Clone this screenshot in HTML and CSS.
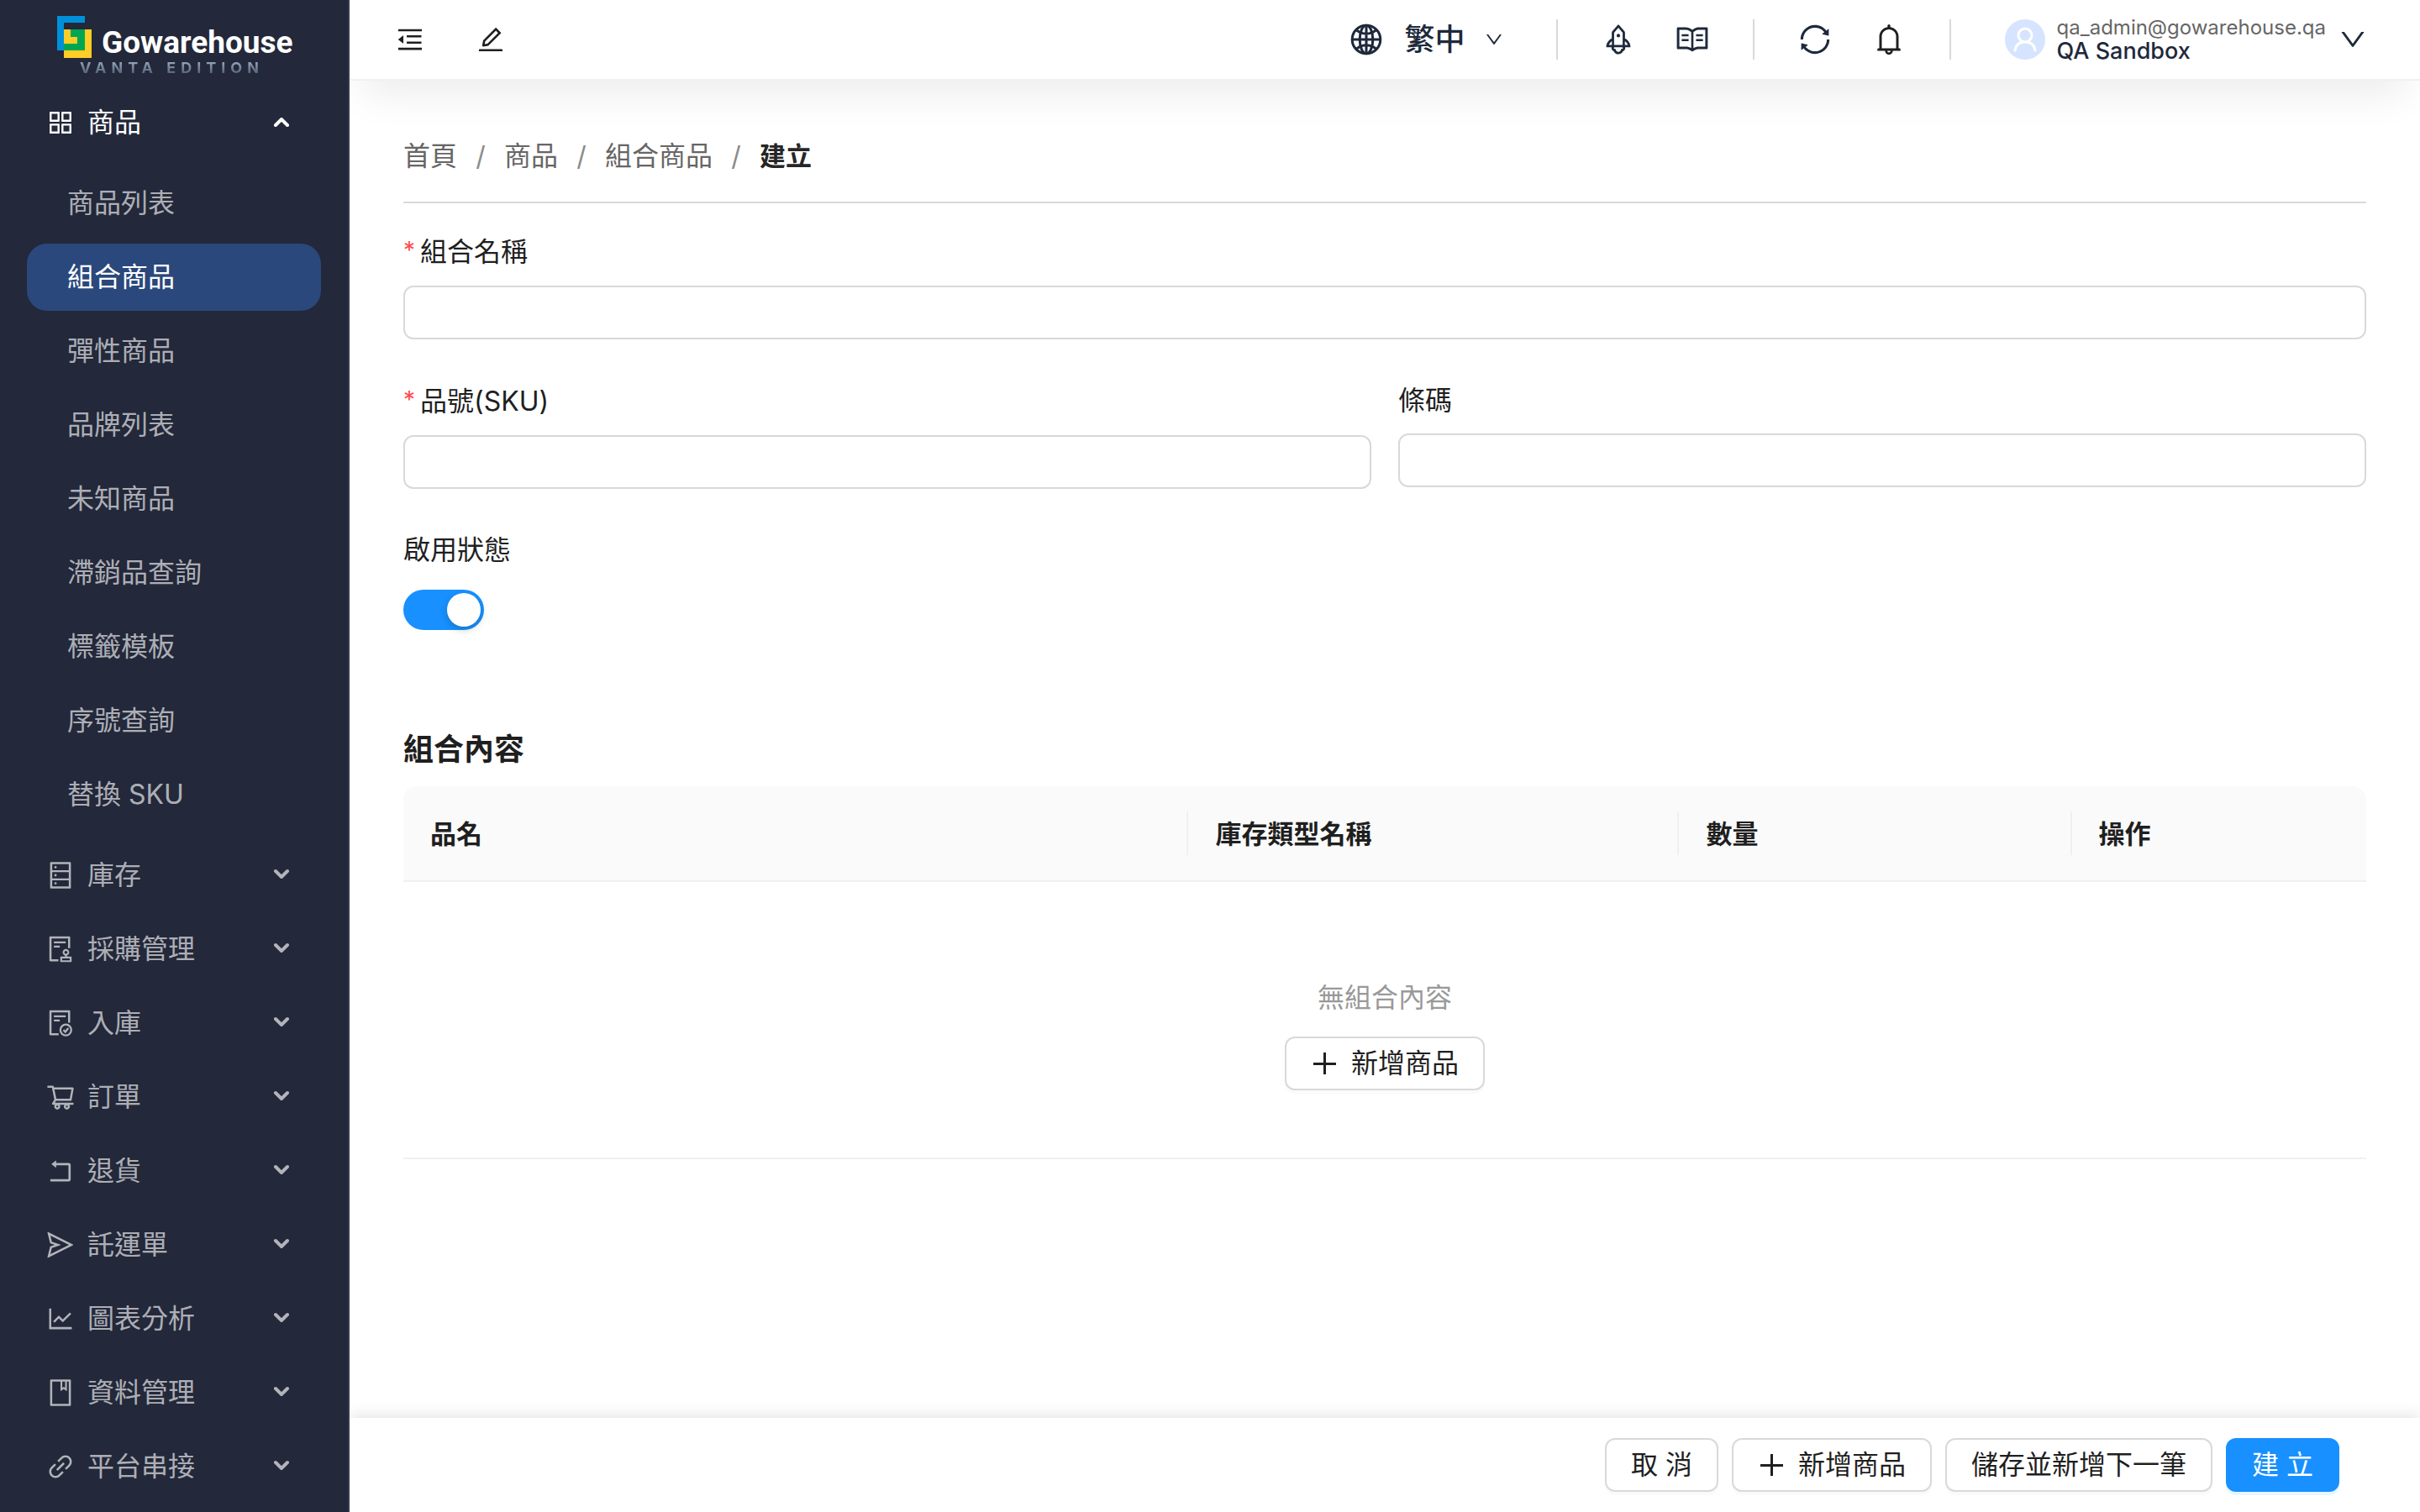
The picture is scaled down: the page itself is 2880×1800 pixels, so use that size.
FILE: index.html
```html
<!DOCTYPE html>
<html lang="zh-Hant">
<head>
<meta charset="utf-8">
<meta name="viewport" content="width=device-width, initial-scale=1">
<title>建立組合商品 - GoWarehouse</title>
<link rel="stylesheet" href="styles.css">
</head>
<body>
<svg class="sprite" aria-hidden="true">
  <symbol id="i-app" viewBox="0 0 1024 1024"><path d="M464 144H160c-8.8 0-16 7.2-16 16v304c0 8.800 7.200 16 16 16h304c8.800 0 16-7.200 16-16V160c0-8.800-7.200-16-16-16zm-52 268H212V212h200v200zm452-268H560c-8.800 0-16 7.200-16 16v304c0 8.800 7.200 16 16 16h304c8.800 0 16-7.200 16-16V160c0-8.800-7.200-16-16-16zm-52 268H612V212h200v200zM464 544H160c-8.800 0-16 7.200-16 16v304c0 8.800 7.200 16 16 16h304c8.800 0 16-7.200 16-16V560c0-8.800-7.200-16-16-16zm-52 268H212V612h200v200zm452-268H560c-8.800 0-16 7.200-16 16v304c0 8.800 7.200 16 16 16h304c8.800 0 16-7.200 16-16V560c0-8.800-7.200-16-16-16zm-52 268H612V612h200v200z"/></symbol>
  <symbol id="i-database" viewBox="0 0 1024 1024"><path d="M832 64H192c-17.700 0-32 14.300-32 32v832c0 17.700 14.300 32 32 32h640c17.700 0 32-14.300 32-32V96c0-17.700-14.300-32-32-32zm-600 72h560v208H232V136zm560 480H232V408h560v208zm0 272H232V680h560v208zM304 240a40 40 0 1 0 80 0 40 40 0 1 0-80 0zm0 272a40 40 0 1 0 80 0 40 40 0 1 0-80 0zm0 272a40 40 0 1 0 80 0 40 40 0 1 0-80 0z"/></symbol>
  <symbol id="i-audit" viewBox="0 0 1024 1024"><path d="M296 250c-4.400 0-8 3.600-8 8v48c0 4.400 3.600 8 8 8h384c4.400 0 8-3.600 8-8v-48c0-4.400-3.600-8-8-8H296zm184 144H296c-4.400 0-8 3.600-8 8v48c0 4.400 3.600 8 8 8h184c4.400 0 8-3.600 8-8v-48c0-4.400-3.600-8-8-8zm-48 458H208V148h560v320c0 4.400 3.600 8 8 8h56c4.400 0 8-3.600 8-8V108c0-17.700-14.300-32-32-32H168c-17.700 0-32 14.300-32 32v784c0 17.700 14.300 32 32 32h264c4.400 0 8-3.600 8-8v-56c0-4.400-3.600-8-8-8zm440-88H728v-36.600c46.300-13.800 80-56.600 80-107.400 0-61.900-50.100-112-112-112s-112 50.100-112 112c0 50.700 33.700 93.600 80 107.400V764H520c-8.800 0-16 7.200-16 16v152c0 8.800 7.200 16 16 16h352c8.800 0 16-7.200 16-16V780c0-8.800-7.200-16-16-16zM646 620c0-27.600 22.400-50 50-50s50 22.400 50 50-22.400 50-50 50-50-22.400-50-50zm180 266H566v-60h260v60z"/></symbol>
  <symbol id="i-inbound" viewBox="0 0 1024 1024"><path d="M296 250c-4.400 0-8 3.600-8 8v48c0 4.400 3.600 8 8 8h384c4.400 0 8-3.600 8-8v-48c0-4.400-3.600-8-8-8H296zm184 144H296c-4.400 0-8 3.600-8 8v48c0 4.400 3.600 8 8 8h184c4.400 0 8-3.600 8-8v-48c0-4.400-3.600-8-8-8zm-40 458H208V148h560v344c0 4.400 3.600 8 8 8h56c4.400 0 8-3.600 8-8V108c0-17.700-14.300-32-32-32H168c-17.700 0-32 14.300-32 32v784c0 17.700 14.300 32 32 32h272c4.400 0 8-3.600 8-8v-56c0-4.400-3.600-8-8-8z"/><g fill="none" stroke="currentColor" stroke-width="64"><circle cx="692" cy="744" r="184"/><path d="M612 744l64 66 100-128"/></g></symbol>
  <symbol id="i-cart" viewBox="0 0 1024 1024"><path d="M922.900 701.900H327.400l29.900-60.900 496.800-.9c16.800 0 31.200-12 34.200-28.600l68.800-385.100c1.800-10.100-.9-20.500-7.500-28.400a34.990 34.990 0 0 0-26.600-12.500l-632-2.100-5.400-25.400c-3.400-16.200-18-28-34.600-28H96.500a35.300 35.300 0 1 0 0 70.600h125.900L246 312.800l58.100 281.300-74.800 122.100a34.960 34.960 0 0 0-3 36.800c6 11.900 18.100 19.400 31.500 19.400h62.800a102.430 102.430 0 0 0-20.600 61.700c0 56.600 46 102.600 102.600 102.600s102.600-46 102.600-102.600c0-22.300-7.400-44-20.600-61.700h161.100a102.430 102.430 0 0 0-20.600 61.700c0 56.600 46 102.600 102.600 102.600s102.600-46 102.600-102.600c0-22.300-7.400-44-20.600-61.700H923c19.400 0 35.300-15.800 35.300-35.300a35.420 35.420 0 0 0-35.400-35.200zM305.700 253l575.800 1.900-56.400 315.800-452.300.8L305.700 253zm96.900 612.700c-17.400 0-31.600-14.200-31.600-31.600 0-17.400 14.200-31.600 31.600-31.600s31.600 14.200 31.600 31.600a31.600 31.600 0 0 1-31.600 31.600zm325.100 0c-17.400 0-31.600-14.200-31.600-31.600 0-17.400 14.200-31.600 31.600-31.600s31.600 14.200 31.600 31.600a31.600 31.600 0 0 1-31.600 31.600z"/></symbol>
  <symbol id="i-rollback" viewBox="0 0 1024 1024"><path d="M793 242H366v-74c0-6.700-7.700-10.400-12.900-6.300l-142 112a8 8 0 0 0 0 12.600l142 112c5.200 4.100 12.900.4 12.900-6.300v-74h415v470H175c-4.400 0-8 3.600-8 8v60c0 4.400 3.600 8 8 8h618c35.300 0 64-28.700 64-64V306c0-35.300-28.700-64-64-64z"/></symbol>
  <symbol id="i-send" viewBox="0 0 1024 1024"><path d="M931.400 498.900L94.900 79.500c-3.400-1.700-7.300-2.100-11-1.200a15.990 15.990 0 0 0-11.700 19.300l86.200 352.200c1.300 5.300 5.200 9.600 10.400 11.300l147.700 50.700-147.600 50.700c-5.200 1.800-9.100 6-10.300 11.300L72.200 926.500c-.9 3.700-.5 7.600 1.200 10.900 3.900 7.900 13.500 11.100 21.500 7.200l836.500-417c3.100-1.500 5.600-4.100 7.200-7.100 3.900-8 .7-17.600-7.200-21.600zM170.800 826.300l50.300-205.600 295.200-101.300c2.300-.8 4.200-2.600 5-5 1.400-4.200-.8-8.700-5-10.200L221.100 403 171 198.200l628 314.900-628.200 313.200z"/></symbol>
  <symbol id="i-chart" viewBox="0 0 1024 1024"><path d="M888 792H200V168c0-4.400-3.600-8-8-8h-56c-4.400 0-8 3.600-8 8v688c0 4.400 3.600 8 8 8h752c4.400 0 8-3.600 8-8v-56c0-4.400-3.600-8-8-8zM305.800 637.700c3.100 3.100 8.100 3.100 11.300 0l138.300-137.600L583 628.500c3.100 3.100 8.200 3.100 11.300 0l275.400-275.300c3.100-3.100 3.100-8.200 0-11.300l-39.600-39.600a8.030 8.030 0 0 0-11.300 0l-230 229.900L461.400 404a8.030 8.030 0 0 0-11.300 0L266.300 586.700a8.030 8.030 0 0 0 0 11.300l39.500 39.700z"/></symbol>
  <symbol id="i-book" viewBox="0 0 1024 1024"><path d="M832 64H192c-17.700 0-32 14.300-32 32v832c0 17.700 14.300 32 32 32h640c17.700 0 32-14.300 32-32V96c0-17.700-14.300-32-32-32zm-260 72h96v209.900L621.500 312 572 347.400V136zm220 752H232V136h280v296.900c0 3.300 1 6.600 3 9.300a15.900 15.900 0 0 0 22.300 3.700l83.800-59.900 81.400 59.400c2.700 2 6 3.100 9.400 3.100 8.800 0 16-7.200 16-16V136h64v752z"/></symbol>
  <symbol id="i-link" viewBox="0 0 1024 1024"><path d="M574 665.400a8.030 8.030 0 0 0-11.300 0L446.500 781.600c-53.800 53.800-144.600 59.500-204 0-59.500-59.500-53.800-150.200 0-204l116.200-116.200c3.100-3.100 3.100-8.200 0-11.300l-39.800-39.800a8.030 8.030 0 0 0-11.300 0L191.400 526.500c-84.600 84.600-84.600 221.500 0 306s221.500 84.600 306 0l116.200-116.200c3.100-3.100 3.100-8.200 0-11.300L574 665.400zm258.600-474c-84.600-84.600-221.500-84.600-306 0L410.300 307.600a8.030 8.030 0 0 0 0 11.300l39.700 39.700c3.100 3.100 8.200 3.100 11.300 0l116.200-116.200c53.800-53.800 144.600-59.500 204 0 59.500 59.500 53.800 150.200 0 204L665.300 562.600a8.030 8.030 0 0 0 0 11.300l39.800 39.800c3.100 3.100 8.200 3.100 11.300 0l116.200-116.200c84.500-84.600 84.500-221.500 0-306.100zM610.100 372.300a8.030 8.030 0 0 0-11.300 0L372.300 598.700a8.030 8.030 0 0 0 0 11.300l39.600 39.600c3.100 3.100 8.200 3.100 11.300 0l226.400-226.400c3.100-3.100 3.100-8.200 0-11.300l-39.500-39.600z"/></symbol>
  <symbol id="i-fold" viewBox="0 0 1024 1024"><path d="M408 442h480c4.400 0 8-3.600 8-8v-56c0-4.400-3.600-8-8-8H408c-4.400 0-8 3.600-8 8v56c0 4.400 3.600 8 8 8zm-8 204c0 4.400 3.600 8 8 8h480c4.400 0 8-3.600 8-8v-56c0-4.400-3.600-8-8-8H408c-4.400 0-8 3.600-8 8v56zm504-486H120c-4.400 0-8 3.600-8 8v56c0 4.400 3.600 8 8 8h784c4.400 0 8-3.600 8-8v-56c0-4.400-3.600-8-8-8zm0 632H120c-4.400 0-8 3.600-8 8v56c0 4.400 3.600 8 8 8h784c4.400 0 8-3.600 8-8v-56c0-4.400-3.600-8-8-8zM115.400 518.900L271.700 642c5.800 4.600 14.400.5 14.400-6.900V388.900c0-7.400-8.500-11.500-14.400-6.900L115.400 505.100a8.740 8.740 0 0 0 0 13.800z"/></symbol>
  <symbol id="i-edit" viewBox="0 0 1024 1024"><path d="M257.700 752c2 0 4-.2 6-.5L431.900 722c2-.4 3.900-1.300 5.300-2.800l423.900-423.900a9.960 9.960 0 0 0 0-14.100L694.900 114.900c-1.900-1.900-4.400-2.900-7.100-2.900s-5.200 1-7.100 2.900L256.800 538.800c-1.500 1.500-2.400 3.300-2.800 5.300l-29.500 168.200a33.500 33.500 0 0 0 9.400 29.800c6.600 6.400 14.900 9.900 23.800 9.900zm67.400-174.400L687.800 215l73.300 73.300-362.700 362.600-88.900 15.700 15.600-89zM880 836H144c-17.700 0-32 14.300-32 32v36c0 4.400 3.600 8 8 8h784c4.400 0 8-3.600 8-8v-36c0-17.700-14.300-32-32-32z"/></symbol>
  <symbol id="i-globe" viewBox="0 0 1024 1024"><g fill="none" stroke="currentColor" stroke-width="74"><circle cx="512" cy="512" r="410"/><ellipse cx="512" cy="512" rx="190" ry="410"/><path d="M512 102v820M102 512h820M218 236q140 112 294 112t294-112M218 788q140-112 294-112t294 112"/></g></symbol>
  <symbol id="i-rocket" viewBox="0 0 1024 1024"><path fill-rule="evenodd" d="M864 736c0-111.600-65.400-208-160-252.900V317.300c0-15.100-5.300-29.700-15.100-41.200L536.500 95.400C530.100 87.800 521 84 512 84s-18.100 3.800-24.500 11.400L335.100 276.100a63.970 63.970 0 0 0-15.100 41.200v165.800C225.400 528 160 624.400 160 736h156.500c-2.300 7.200-3.500 15-3.500 23.800 0 22.100 7.600 43.700 21.400 60.800a97.200 97.200 0 0 0 43.100 30.600c23.100 54 75.600 88.800 134.500 88.800 29.100 0 57.300-8.600 81.400-24.800 23.600-15.800 41.900-37.900 53-64a97 97 0 0 0 43.100-30.500 97.520 97.520 0 0 0 21.400-60.800c0-8.400-1.100-16.400-3.100-23.800H864zM762.300 621.400c9.400 14.600 17 30.300 22.500 46.600H700V558.700a211.600 211.600 0 0 1 62.300 62.700zM388 483.100V318.800l124-147 124 147V668H388V483.100zM239.200 668c5.500-16.300 13.100-32 22.500-46.600 16.300-25.200 37.500-46.500 62.300-62.700V668h-84.800zm388.900 116.200c-5.200 3-11.200 4.200-17.100 3.400l-19.500-2.400-2.800 19.400c-5.400 37.900-38.400 66.500-76.700 66.500-38.300 0-71.300-28.600-76.700-66.500l-2.800-19.500-19.500 2.500a27.700 27.700 0 0 1-17.100-3.500c-8.700-5-14.100-14.300-14.100-24.400 0-10.600 5.900-19.400 14.600-23.800h231.300c8.800 4.500 14.600 13.300 14.600 23.800-.1 10.200-5.500 19.600-14.200 24.500z"/><circle cx="512" cy="400" r="50"/></symbol>
  <symbol id="i-read" viewBox="0 0 1024 1024"><path d="M928 161H699.200c-49.100 0-97.100 14.100-138.400 40.700L512 233l-48.800-31.300A255.200 255.200 0 0 0 324.800 161H96c-17.700 0-32 14.300-32 32v568c0 17.700 14.300 32 32 32h228.800c49.100 0 97.100 14.100 138.400 40.700l44.400 28.600c1.300.8 2.800 1.300 4.300 1.300s3-.4 4.300-1.300l44.400-28.600C602 807.100 650.100 793 699.200 793H928c17.700 0 32-14.300 32-32V193c0-17.700-14.300-32-32-32zM324.800 721H136V233h188.800c35.400 0 69.800 10.100 99.500 29.200l48.800 31.300 6.900 4.500v462c-47.600-25.600-100.800-39-155.200-39zm563.200 0H699.200c-54.400 0-107.600 13.400-155.200 39V298l6.900-4.500 48.800-31.300c29.700-19.100 64.100-29.200 99.500-29.200H888v488zM204 361h200v60H204zM620 361h200v60H620zM204 501h200v60H204zM620 501h200v60H620z"/></symbol>
  <symbol id="i-sync" viewBox="0 0 1024 1024"><path d="M168 504.200c1-43.700 10-86.100 26.900-126 17.300-41 42.100-77.700 73.700-109.400S337 212.300 378 195c42.400-17.900 87.400-27 133.900-27s91.500 9.100 133.800 27A341.500 341.500 0 0 1 755 268.800c9.900 9.900 19.200 20.400 27.800 31.400l-60.200 47a8 8 0 0 0 3 14.100l175.700 43c5 1.200 9.900-2.600 9.900-7.700l.8-180.900c0-6.700-7.700-10.500-12.900-6.300l-56.400 44.100C765.800 155.100 646.200 92 511.800 92 282.700 92 96.300 275.600 92 503.800a8 8 0 0 0 8 8.200h60c4.400 0 7.900-3.500 8-7.800zm756 7.800h-60c-4.400 0-7.900 3.500-8 7.800-1 43.700-10 86.100-26.900 126-17.300 41-42.100 77.800-73.700 109.400A342.450 342.450 0 0 1 512.100 856a342.240 342.240 0 0 1-243.200-100.800c-9.900-9.900-19.200-20.400-27.800-31.400l60.200-47a8 8 0 0 0-3-14.100l-175.700-43c-5-1.200-9.900 2.600-9.900 7.700l-.7 181c0 6.700 7.700 10.500 12.900 6.300l56.400-44.100C258.200 868.900 377.800 932 512.200 932c229.200 0 415.500-183.700 419.800-411.800a8 8 0 0 0-8-8.200z"/></symbol>
  <symbol id="i-bell" viewBox="0 0 1024 1024"><path d="M816 768h-24V428c0-141.100-104.300-257.700-240-277.100V112c0-22.100-17.900-40-40-40s-40 17.900-40 40v38.900c-135.700 19.400-240 136-240 277.100v340h-24c-17.700 0-32 14.300-32 32v32c0 4.400 3.600 8 8 8h216c0 61.800 50.200 112 112 112s112-50.200 112-112h216c4.400 0 8-3.600 8-8v-32c0-17.700-14.300-32-32-32zM512 888c-26.500 0-48-21.500-48-48h96c0 26.500-21.500 48-48 48zM304 768V428c0-55.600 21.600-107.800 60.900-147.100S456.400 220 512 220c55.600 0 107.800 21.600 147.100 60.900S720 372.400 720 428v340H304z"/></symbol>
  <symbol id="i-down" viewBox="0 0 1024 1024"><path d="M884 256h-75c-5.100 0-9.900 2.500-12.900 6.600L512 654.200 227.900 262.600c-3-4.100-7.800-6.600-12.900-6.600h-75c-6.500 0-10.300 7.400-6.500 12.700l352.600 486.100c12.800 17.600 39 17.600 51.700 0l352.600-486.100c3.900-5.300.1-12.700-6.400-12.700z"/></symbol>
  <symbol id="i-plus" viewBox="0 0 32 32"><path d="M15 3h3v26h-3zM3 15h27v3H3z"/></symbol>
  <symbol id="i-arrow" viewBox="0 0 20 12"><path d="M3 3l7 7 7-7" fill="none" stroke="currentColor" stroke-width="4" stroke-linecap="round"/></symbol>
</svg>

<div class="app">
  <aside class="sidebar">
    <a class="brand" href="#">
      <span class="brand__row">
        <svg class="brand__mark" viewBox="0 0 41 50" aria-hidden="true">
          <path fill="#0090da" d="M0 0h33v8H8v33H0z"/>
          <path fill="#ffcd28" d="M8 16h33v34H8z"/>
          <path fill="#00a651" d="M16 16h17v25H8v-8h16v-8h-8z"/>
        </svg>
        <span class="brand__name">Gowarehouse</span>
      </span>
      <span class="brand__edition">VANTA EDITION</span>
    </a>
    <nav class="menu" aria-label="主選單">
      <button class="menu__group menu__group--open" type="button" aria-expanded="true"><svg class="menu__icon"><use href="#i-app"/></svg><span class="menu__text">商品</span><svg class="menu__arrow"><use href="#i-arrow"/></svg></button>
      <div class="submenu">
        <a class="submenu__item" href="#">商品列表</a>
        <a class="submenu__item submenu__item--active" href="#" aria-current="page">組合商品</a>
        <a class="submenu__item" href="#">彈性商品</a>
        <a class="submenu__item" href="#">品牌列表</a>
        <a class="submenu__item" href="#">未知商品</a>
        <a class="submenu__item" href="#">滯銷品查詢</a>
        <a class="submenu__item" href="#">標籤模板</a>
        <a class="submenu__item" href="#">序號查詢</a>
        <a class="submenu__item" href="#">替換 SKU</a>
      </div>
      <button class="menu__group" type="button"><svg class="menu__icon"><use href="#i-database"/></svg><span class="menu__text">庫存</span><svg class="menu__arrow"><use href="#i-arrow"/></svg></button>
      <button class="menu__group" type="button"><svg class="menu__icon"><use href="#i-audit"/></svg><span class="menu__text">採購管理</span><svg class="menu__arrow"><use href="#i-arrow"/></svg></button>
      <button class="menu__group" type="button"><svg class="menu__icon"><use href="#i-inbound"/></svg><span class="menu__text">入庫</span><svg class="menu__arrow"><use href="#i-arrow"/></svg></button>
      <button class="menu__group" type="button"><svg class="menu__icon"><use href="#i-cart"/></svg><span class="menu__text">訂單</span><svg class="menu__arrow"><use href="#i-arrow"/></svg></button>
      <button class="menu__group" type="button"><svg class="menu__icon"><use href="#i-rollback"/></svg><span class="menu__text">退貨</span><svg class="menu__arrow"><use href="#i-arrow"/></svg></button>
      <button class="menu__group" type="button"><svg class="menu__icon"><use href="#i-send"/></svg><span class="menu__text">託運單</span><svg class="menu__arrow"><use href="#i-arrow"/></svg></button>
      <button class="menu__group" type="button"><svg class="menu__icon"><use href="#i-chart"/></svg><span class="menu__text">圖表分析</span><svg class="menu__arrow"><use href="#i-arrow"/></svg></button>
      <button class="menu__group" type="button"><svg class="menu__icon"><use href="#i-book"/></svg><span class="menu__text">資料管理</span><svg class="menu__arrow"><use href="#i-arrow"/></svg></button>
      <button class="menu__group" type="button"><svg class="menu__icon"><use href="#i-link"/></svg><span class="menu__text">平台串接</span><svg class="menu__arrow"><use href="#i-arrow"/></svg></button>
    </nav>
  </aside>

  <div class="page">
    <header class="topbar">
      <div class="topbar__tools">
        <button class="icon-btn icon-btn--small" type="button" aria-label="收合選單"><svg><use href="#i-fold"/></svg></button>
        <button class="icon-btn icon-btn--small" type="button" aria-label="編輯"><svg><use href="#i-edit"/></svg></button>
      </div>
      <button class="lang" type="button" aria-haspopup="true"><svg class="lang__globe"><use href="#i-globe"/></svg><span>繁中</span><svg class="lang__down"><use href="#i-down"/></svg></button>
      <div class="topbar__group">
        <button class="icon-btn" type="button" aria-label="最新功能"><svg><use href="#i-rocket"/></svg></button>
        <button class="icon-btn" type="button" aria-label="使用手冊"><svg><use href="#i-read"/></svg></button>
      </div>
      <div class="topbar__group">
        <button class="icon-btn" type="button" aria-label="重新整理"><svg><use href="#i-sync"/></svg></button>
        <button class="icon-btn icon-btn--dark" type="button" aria-label="通知"><svg><use href="#i-bell"/></svg></button>
      </div>
      <button class="account" type="button" aria-haspopup="true">
        <svg class="account__avatar" viewBox="0 0 48 48" aria-hidden="true"><circle cx="24" cy="24" r="24" fill="#d6e4ff"/><g fill="none" stroke="#fff" stroke-width="3" stroke-linecap="round"><circle cx="24" cy="19" r="8"/><path d="M12 37c1-7 5-10 12-10s11 3 12 10"/></g></svg>
        <span class="account__text"><span class="account__mail">qa_admin@gowarehouse.qa</span><span class="account__name">QA Sandbox</span></span>
        <svg class="account__down"><use href="#i-down"/></svg>
      </button>
    </header>

    <main class="content">
      <nav class="breadcrumb" aria-label="麵包屑">
        <a href="#">首頁</a><span class="breadcrumb__sep">/</span><a href="#">商品</a><span class="breadcrumb__sep">/</span><a href="#">組合商品</a><span class="breadcrumb__sep">/</span><strong>建立</strong>
      </nav>
      <form class="form" id="bundle-form">
        <div class="field">
          <label class="field__label field__label--required" for="name">組合名稱</label>
          <input class="field__input" id="name" type="text" required>
        </div>
        <div class="form__row">
          <div class="field">
            <label class="field__label field__label--required" for="sku">品號(SKU)</label>
            <input class="field__input" id="sku" type="text" required>
          </div>
          <div class="field">
            <label class="field__label" for="barcode">條碼</label>
            <input class="field__input" id="barcode" type="text">
          </div>
        </div>
        <div class="field field--switch">
          <label class="field__label" for="enabled">啟用狀態</label>
          <input class="switch" id="enabled" type="checkbox" role="switch" checked>
        </div>
      </form>
      <section class="bundle">
        <h2 class="bundle__title">組合內容</h2>
        <table class="table">
          <colgroup><col class="table__name"><col class="table__type"><col class="table__qty"><col class="table__action"></colgroup>
          <thead><tr><th scope="col">品名</th><th scope="col">庫存類型名稱</th><th scope="col">數量</th><th scope="col">操作</th></tr></thead>
          <tbody><tr><td colspan="4">
            <div class="empty">
              <p class="empty__text">無組合內容</p>
              <button class="btn" type="button"><svg class="btn__icon"><use href="#i-plus"/></svg>新增商品</button>
            </div>
          </td></tr></tbody>
        </table>
      </section>
    </main>

    <footer class="actions">
      <button class="btn" type="button">取 消</button>
      <button class="btn" type="button"><svg class="btn__icon"><use href="#i-plus"/></svg>新增商品</button>
      <button class="btn" type="button">儲存並新增下一筆</button>
      <button class="btn btn--primary" type="submit" form="bundle-form">建 立</button>
    </footer>
  </div>
</div>
</body>
</html>
```
FILE: styles.css
```css
:root {
  --text: #1f1f1f;
  --ink: #1e293b;
  --line: #d9d9d9;
  --line-soft: #f0f0f0;
  --primary: #1890ff;
  --side: #23283a;
}

* { box-sizing: border-box; }

body {
  margin: 0;
  background: #fff;
  color: var(--text);
  font: 400 32px/48px Inter, "Noto Sans CJK TC", sans-serif;
}

button, input { font: inherit; color: inherit; }
button { padding: 0; border: 0; background: none; cursor: pointer; }
a { color: inherit; text-decoration: none; }
svg { display: block; flex: none; fill: currentColor; }
.sprite { position: absolute; width: 0; height: 0; }

.app { display: flex; min-height: 100vh; }

/* Sidebar */
.sidebar {
  position: relative;
  z-index: 2;
  flex: none;
  width: 416px;
  background: var(--side);
  border-right: 2px solid #343a4c;
  color: rgba(255, 255, 255, .65);
}
.brand { display: block; height: 106px; padding: 19px 0 0 68px; }
.brand__row { display: flex; gap: 12px; height: 50px; }
.brand__mark { width: 41px; height: 50px; }
.brand__name {
  color: #fff;
  font: 700 37px/64px Roboto, sans-serif;
}
.brand__edition {
  display: block;
  width: max-content;
  margin-left: 27px;
  font: 700 18px/24px Inter, sans-serif;
  letter-spacing: 6px;
  background: linear-gradient(#94a3b8 20%, #475569 90%);
  background-clip: text;
  color: transparent;
}
.menu { display: flex; flex-direction: column; gap: 8px; }
.menu__group {
  display: flex;
  align-items: center;
  gap: 14px;
  height: 80px;
  padding: 0 69px 0 54px;
  text-align: left;
}
.menu__group--open { color: #fff; }
.menu__icon { width: 36px; height: 36px; }
.menu__text { flex: 1; }
.menu__arrow { width: 20px; height: 12px; margin-bottom: 4px; }
.menu__group--open .menu__arrow { transform: rotate(180deg); margin-bottom: 0; }
.submenu {
  display: flex;
  flex-direction: column;
  gap: 8px;
  padding: 8px 32px;
}
.submenu__item {
  height: 80px;
  padding-left: 48px;
  border-radius: 24px;
  line-height: 80px;
}
.submenu__item--active { background: #2a487c; color: #fff; }

/* Page frame */
.page { display: flex; flex: 1; flex-direction: column; min-width: 0; }
.topbar {
  position: sticky;
  top: 0;
  z-index: 1;
  display: flex;
  align-items: center;
  height: 96px;
  padding: 0 62px 0 54px;
  background: #fff;
  border-bottom: 2px solid var(--line-soft);
  box-shadow: 0 32px 48px -16px rgba(0, 0, 0, .08);
  color: var(--ink);
}
.topbar__tools { display: flex; gap: 60px; margin-right: auto; color: var(--text); }
.icon-btn svg { width: 42px; height: 42px; }
.icon-btn--small svg { width: 36px; height: 36px; }
.icon-btn--dark { color: var(--text); }
.topbar__group, .account {
  display: flex;
  align-items: center;
  height: 48px;
  border-left: 2px solid var(--line);
}
.topbar__group { gap: 46px; padding: 0 51px; }
.lang {
  display: flex;
  align-items: center;
  padding-right: 62px;
  font-size: 36px;
  font-weight: 500;
}
.lang__globe { width: 42px; height: 42px; margin-right: 25px; }
.lang__down { width: 24px; height: 24px; margin-left: 22px; }
.account { gap: 14px; padding-left: 64px; text-align: left; }
.account__avatar { width: 48px; height: 48px; }
.account__text { display: flex; flex-direction: column; line-height: 28px; }
.account__mail { color: #666; font-size: 24px; }
.account__name { font-size: 27px; font-weight: 500; }
.account__down { width: 36px; height: 36px; }

.content { flex: 1; padding: 66px 64px 48px; }

.breadcrumb {
  display: flex;
  padding-bottom: 30px;
  border-bottom: 2px solid var(--line);
  color: #666;
}
.breadcrumb__sep { width: 56px; color: #8c8c8c; text-align: center; }
.breadcrumb strong { color: #262626; font-size: 31px; }

/* Form */
.form { display: flex; flex-direction: column; gap: 52px; padding-top: 36px; }
.form__row { display: grid; grid-template-columns: 1fr 1fr; gap: 32px; }
.field { display: flex; flex-direction: column; gap: 18px; }
.field--switch { gap: 26px; }
.field__label { line-height: 42px; }
.field__label--required { display: flex; gap: 6px; line-height: 44px; }
.field__label--required::before {
  content: "*";
  color: #ff4d4f;
  font-size: 28px;
  line-height: 40px;
}
.field__input {
  width: 100%;
  height: 64px;
  padding: 0 22px;
  border: 2px solid var(--line);
  border-radius: 12px;
  background: #fff;
}
.switch {
  display: flex;
  width: 96px;
  height: 48px;
  margin: 0;
  padding: 4px;
  border-radius: 24px;
  appearance: none;
  background: #bfbfbf;
}
.switch::before {
  content: "";
  width: 40px;
  height: 40px;
  border-radius: 50%;
  background: #fff;
  box-shadow: 0 4px 8px rgba(0, 35, 11, .2);
}
.switch:checked { justify-content: flex-end; background: var(--primary); }

/* Bundle table */
.bundle { margin-top: 118px; }
.bundle__title { margin: 0 0 20px; font-size: 36px; line-height: 48px; }
.table { width: 100%; border-collapse: separate; border-spacing: 0; table-layout: fixed; }
.table__name { width: 40%; }
.table__type { width: 25%; }
.table__qty { width: 20%; }
.table__action { width: 15%; }
.table th {
  height: 114px;
  padding: 2px 0 0 32px;
  border-bottom: 2px solid var(--line-soft);
  background: linear-gradient(var(--line-soft), var(--line-soft)) right center / 2px 52px no-repeat #fafafa;
  font-size: 31px;
  text-align: left;
}
.table th:first-child { border-top-left-radius: 16px; }
.table th:last-child { border-top-right-radius: 16px; background: #fafafa; }
.table td { padding: 114px 32px 80px; border-bottom: 2px solid var(--line-soft); }
.empty { display: flex; flex-direction: column; align-items: center; gap: 22px; }
.empty__text { margin: 0; color: #999; }

/* Buttons */
.btn {
  display: flex;
  align-items: center;
  gap: 16px;
  height: 64px;
  padding: 0 29px;
  border: 2px solid var(--line);
  border-radius: 12px;
  background: #fff;
  box-shadow: 0 4px 0 rgba(0, 0, 0, .02);
  white-space: nowrap;
}
.btn__icon { width: 32px; height: 32px; }
.btn--primary {
  border-color: var(--primary);
  background: var(--primary);
  box-shadow: 0 4px 0 #e6f7ff;
  color: #fff;
}
.actions {
  position: sticky;
  bottom: 0;
  display: flex;
  justify-content: flex-end;
  gap: 16px;
  padding: 24px 96px;
  background: #fff;
  box-shadow: 0 -4px 16px rgba(0, 0, 0, .1);
}
```
